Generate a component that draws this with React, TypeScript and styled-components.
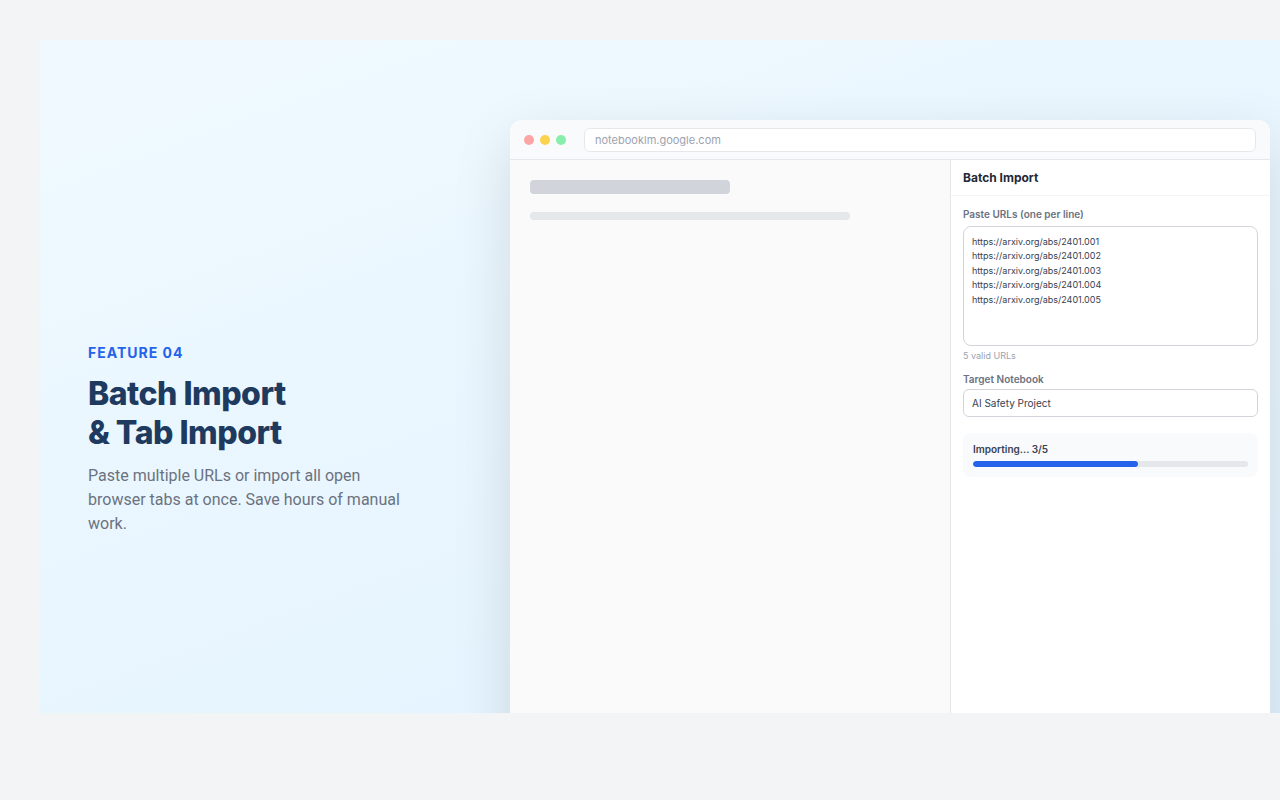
import React, { useState } from "react";
import styled, { createGlobalStyle } from "styled-components";

const GlobalStyle = createGlobalStyle`
  *, *::before, *::after { box-sizing: border-box; }
  body {
    margin: 0;
    background: #f3f4f6;
    font-family: Inter, "Liberation Sans", sans-serif;
  }
  input, textarea, select { font-family: inherit; outline: none; }
`;

const Page = styled.div`
  min-height: 100vh;
  padding: 40px 0 0 40px;
  overflow: hidden;
`;

const Preview = styled.div`
  height: calc(100vh - 127px);
  overflow: hidden;
`;

const Stage = styled.main`
  display: flex;
  align-items: center;
  width: calc(100% + 40px);
  height: 100vh;
  padding: 0 50px 0 48px;
  background: linear-gradient(160deg, #f0f9ff 0%, #e0f2fe 100%);
`;

const Copy = styled.section`
  flex: 0 0 422px;
  padding-right: 96px;
`;

const Eyebrow = styled.p`
  margin: 0 0 12px;
  font-size: 14px;
  line-height: 18px;
  font-weight: 700;
  letter-spacing: 1px;
  text-transform: uppercase;
  color: #2563eb;
`;

const Title = styled.h1`
  margin: 0 0 12px;
  font-size: 32px;
  line-height: 39px;
  font-weight: 800;
  letter-spacing: -0.5px;
  color: #1e3a5f;
`;

const Lead = styled.p`
  margin: 0;
  font-family: Roboto, Inter, sans-serif;
  font-size: 16px;
  line-height: 24px;
  color: #6b7280;
`;

const Browser = styled.section`
  flex: 1;
  display: flex;
  flex-direction: column;
  height: calc(100% - 160px);
  border-radius: 12px;
  background: #fff;
  overflow: hidden;
  box-shadow: 0 20px 60px rgba(0, 0, 0, 0.12);
`;

const Toolbar = styled.header`
  display: flex;
  align-items: center;
  gap: 6px;
  height: 40px;
  padding: 0 14px;
  background: #f9fafb;
  border-bottom: 1px solid #e5e7eb;
`;

const Dot = styled.span<{ $color: string }>`
  width: 10px;
  height: 10px;
  border-radius: 50%;
  background: ${(p) => p.$color};
`;

const Address = styled.input`
  flex: 1;
  min-width: 0;
  height: 24px;
  margin-left: 12px;
  padding: 0 10px;
  border: 1px solid #e5e7eb;
  border-radius: 6px;
  background: #fff;
  font-size: 11px;
  color: #9ca3af;
`;

const Body = styled.div`
  flex: 1;
  display: flex;
`;

const Content = styled.div`
  flex: 1;
  display: flex;
  flex-direction: column;
  gap: 18px;
  padding: 20px;
  background: #fafafa;
`;

const Bar = styled.span<{ $width: string; $height: string; $color: string }>`
  width: ${(p) => p.$width};
  height: ${(p) => p.$height};
  border-radius: 4px;
  background: ${(p) => p.$color};
`;

const Panel = styled.aside`
  flex: 0 0 320px;
  border-left: 1px solid #e5e7eb;
  background: #fff;
`;

const PanelTitle = styled.h2`
  margin: 0;
  padding: 10px 12px;
  border-bottom: 1px solid #f3f4f6;
  font-size: 12px;
  line-height: 15px;
  font-weight: 700;
  color: #1f2937;
`;

const Form = styled.form`
  display: flex;
  flex-direction: column;
  padding: 12px;
`;

const Label = styled.label<{ $gap: number }>`
  margin-bottom: ${(p) => p.$gap}px;
  font-size: 10px;
  line-height: 12px;
  font-weight: 600;
  color: #6b7280;
`;

const UrlBox = styled.textarea`
  display: block;
  width: 100%;
  height: 120px;
  padding: 8px;
  border: 1px solid #d1d5db;
  border-radius: 8px;
  background: #fff;
  font-size: 9px;
  line-height: 1.6;
  color: #374151;
  resize: none;
`;

const Hint = styled.p`
  margin: 4px 0 12px;
  font-size: 9px;
  line-height: 11px;
  color: #9ca3af;
`;

const Select = styled.select`
  appearance: none;
  width: 100%;
  height: 28px;
  padding: 0 8px;
  border: 1px solid #d1d5db;
  border-radius: 6px;
  background: #fff;
  font-size: 10px;
  color: #374151;
`;

const Status = styled.div`
  margin-top: 16px;
  padding: 10px;
  border-radius: 8px;
  background: #f9fafb;
`;

const StatusText = styled.p`
  margin: 0 0 6px;
  font-size: 10px;
  line-height: 12px;
  font-weight: 600;
  color: #374151;
`;

const Track = styled.div`
  height: 6px;
  border-radius: 3px;
  background: #e5e7eb;
  overflow: hidden;
`;

const Fill = styled.div`
  height: 100%;
  border-radius: 3px;
  background: #2563eb;
`;

const initialUrls = ["001", "002", "003", "004", "005"]
  .map((id) => `https://arxiv.org/abs/2401.${id}`)
  .join("\n");

export default function App() {
  const [urls, setUrls] = useState(initialUrls);
  const total = urls.split("\n").filter((u) => u.trim() !== "").length;
  const done = Math.min(3, total);
  const percent = total ? (done / total) * 100 : 0;

  return (
    <>
      <GlobalStyle />
      <Page>
        <Preview>
          <Stage>
            <Copy>
              <Eyebrow>Feature 04</Eyebrow>
              <Title>
                Batch Import
                <br />
                &amp; Tab Import
              </Title>
              <Lead>
                Paste multiple URLs or import all open browser tabs at once. Save hours of manual
                work.
              </Lead>
            </Copy>
            <Browser>
              <Toolbar>
                <Dot $color="#fca5a5" />
                <Dot $color="#fcd34d" />
                <Dot $color="#86efac" />
                <Address aria-label="Address" defaultValue="notebooklm.google.com" />
              </Toolbar>
              <Body>
                <Content>
                  <Bar $width="50%" $height="14px" $color="#d1d5db" />
                  <Bar $width="80%" $height="8px" $color="#e5e7eb" />
                </Content>
                <Panel>
                  <PanelTitle>Batch Import</PanelTitle>
                  <Form>
                    <Label htmlFor="urls" $gap={6}>
                      Paste URLs (one per line)
                    </Label>
                    <UrlBox
                      id="urls"
                      spellCheck={false}
                      value={urls}
                      onChange={(e) => setUrls(e.target.value)}
                    />
                    <Hint>{total} valid URLs</Hint>
                    <Label htmlFor="notebook" $gap={4}>
                      Target Notebook
                    </Label>
                    <Select id="notebook">
                      <option>AI Safety Project</option>
                    </Select>
                    <Status>
                      <StatusText>
                        Importing... {done}/{total}
                      </StatusText>
                      <Track
                        role="progressbar"
                        aria-label="Import progress"
                        aria-valuemin={0}
                        aria-valuemax={total}
                        aria-valuenow={done}
                      >
                        <Fill style={{ width: `${percent}%` }} />
                      </Track>
                    </Status>
                  </Form>
                </Panel>
              </Body>
            </Browser>
          </Stage>
        </Preview>
      </Page>
    </>
  );
}
